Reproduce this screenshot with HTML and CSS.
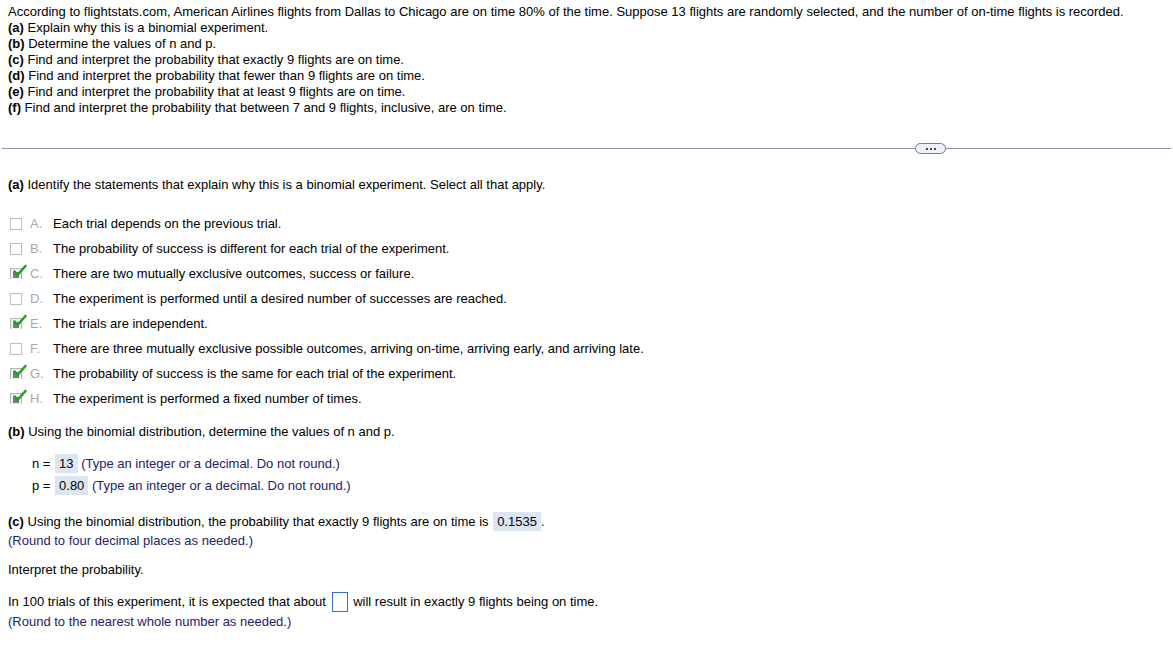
FILE: index.html
```html
<!DOCTYPE html>
<html>
<head>
<meta charset="utf-8">
<link rel="stylesheet" href="styles.css">
</head>
<body>
<div class="page">
  <div class="intro">
    <p>According to flightstats.com, American Airlines flights from Dallas to Chicago are on time 80% of the time. Suppose 13 flights are randomly selected, and the number of on-time flights is recorded.</p>
    <p><b>(a)</b> Explain why this is a binomial experiment.</p>
    <p><b>(b)</b> Determine the values of n and p.</p>
    <p><b>(c)</b> Find and interpret the probability that exactly 9 flights are on time.</p>
    <p><b>(d)</b> Find and interpret the probability that fewer than 9 flights are on time.</p>
    <p><b>(e)</b> Find and interpret the probability that at least 9 flights are on time.</p>
    <p><b>(f)</b> Find and interpret the probability that between 7 and 9 flights, inclusive, are on time.</p>
  </div>

  <div class="divider"><span class="pill"><i></i><i></i><i></i></span></div>

  <p class="q-a"><b>(a)</b> Identify the statements that explain why this is a binomial experiment. Select all that apply.</p>

  <ul class="options">
    <li><span class="box"></span><span class="letter">A.</span><span>Each trial depends on the previous trial.</span></li>
    <li><span class="box"></span><span class="letter">B.</span><span>The probability of success is different for each trial of the experiment.</span></li>
    <li><span class="box checked"><svg width="20" height="16" viewBox="0 0 20 16"><rect x="0.5" y="5.5" width="11" height="11" fill="#f2f2f2" stroke="#b4b4b4"/><path d="M3 9h6v6H3z" fill="#7a7a7a"/><path d="M4.5 8.5 L7.5 12 L15.5 3" fill="none" stroke="#2d9a2d" stroke-width="2.6" stroke-linecap="round" stroke-linejoin="round"/></svg></span><span class="letter">C.</span><span>There are two mutually exclusive outcomes, success or failure.</span></li>
    <li><span class="box"></span><span class="letter">D.</span><span>The experiment is performed until a desired number of successes are reached.</span></li>
    <li><span class="box checked"><svg width="20" height="16" viewBox="0 0 20 16"><rect x="0.5" y="5.5" width="11" height="11" fill="#f2f2f2" stroke="#b4b4b4"/><path d="M3 9h6v6H3z" fill="#7a7a7a"/><path d="M4.5 8.5 L7.5 12 L15.5 3" fill="none" stroke="#2d9a2d" stroke-width="2.6" stroke-linecap="round" stroke-linejoin="round"/></svg></span><span class="letter">E.</span><span>The trials are independent.</span></li>
    <li><span class="box"></span><span class="letter">F.</span><span>There are three mutually exclusive possible outcomes, arriving on-time, arriving early, and arriving late.</span></li>
    <li><span class="box checked"><svg width="20" height="16" viewBox="0 0 20 16"><rect x="0.5" y="5.5" width="11" height="11" fill="#f2f2f2" stroke="#b4b4b4"/><path d="M3 9h6v6H3z" fill="#7a7a7a"/><path d="M4.5 8.5 L7.5 12 L15.5 3" fill="none" stroke="#2d9a2d" stroke-width="2.6" stroke-linecap="round" stroke-linejoin="round"/></svg></span><span class="letter">G.</span><span>The probability of success is the same for each trial of the experiment.</span></li>
    <li><span class="box checked"><svg width="20" height="16" viewBox="0 0 20 16"><rect x="0.5" y="5.5" width="11" height="11" fill="#f2f2f2" stroke="#b4b4b4"/><path d="M3 9h6v6H3z" fill="#7a7a7a"/><path d="M4.5 8.5 L7.5 12 L15.5 3" fill="none" stroke="#2d9a2d" stroke-width="2.6" stroke-linecap="round" stroke-linejoin="round"/></svg></span><span class="letter">H.</span><span>The experiment is performed a fixed number of times.</span></li>
  </ul>

  <p class="q-b"><b>(b)</b> Using the binomial distribution, determine the values of n and p.</p>
  <div class="np">
    <p>n = <span class="ans">13</span> <span class="hint">(Type an integer or a decimal. Do not round.)</span></p>
    <p>p = <span class="ans">0.80</span> <span class="hint">(Type an integer or a decimal. Do not round.)</span></p>
  </div>

  <p class="q-c"><b>(c)</b> Using the binomial distribution, the probability that exactly 9 flights are on time is <span class="ans">0.1535</span>.</p>
  <p class="hint">(Round to four decimal places as needed.)</p>
  <p class="interp">Interpret the probability.</p>
  <p class="trials">In 100 trials of this experiment, it is expected that about <span class="blank"></span> will result in exactly 9 flights being on time.</p>
  <p class="hint">(Round to the nearest whole number as needed.)</p>
</div>
</body>
</html>
```

FILE: styles.css
```css
html, body {
  margin: 0;
  padding: 0;
  background: #fff;
}
body {
  font-family: "Liberation Sans", Arial, sans-serif;
  font-size: 13px;
  color: #000;
}
p {
  margin: 0;
}
.page {
  padding: 4px 8px 0 8px;
}
.intro p {
  line-height: 16px;
}
.divider {
  position: relative;
  margin: 32px -6px 0 -6px;
  height: 1px;
  background: #8a96aa;
}
.pill {
  position: absolute;
  left: 913px;
  top: -5px;
  width: 29px;
  height: 9px;
  border: 1px solid #6e7d92;
  border-radius: 6px;
  background: #eef1f5;
  display: flex;
  justify-content: center;
  align-items: center;
  gap: 2px;
}
.pill i {
  width: 2px;
  height: 2px;
  background: #3c4656;
  display: block;
}
.q-a {
  margin-top: 28px;
  line-height: 16px;
}
.options {
  list-style: none;
  margin: 18px 0 0 0;
  padding: 0;
}
.options li {
  display: flex;
  align-items: center;
  height: 25px;
}
.box {
  width: 12px;
  height: 12px;
  border: 1px solid #bdbdbd;
  box-sizing: border-box;
  margin-left: 2px;
  margin-right: 8px;
  flex: none;
}
.box.checked {
  border: none;
  width: 20px;
  height: 16px;
  margin-right: 0;
  margin-top: -5px;
}
.box.checked svg {
  display: block;
}
.letter {
  color: #a8a8a8;
  width: 23px;
  flex: none;
}
.q-b {
  margin-top: 13px;
  line-height: 16px;
}
.np {
  margin-top: 13px;
  padding-left: 24px;
}
.np p {
  line-height: 22px;
}
.ans {
  background: #dde5f0;
  padding: 2px 4px;
  margin-left: 1px;
}
.hint {
  color: #22226e;
}
.q-c {
  margin-top: 15px;
  line-height: 20px;
}
.q-c + .hint {
  line-height: 18px;
}
.interp {
  margin-top: 11px;
  line-height: 18px;
}
.trials {
  margin-top: 13px;
  line-height: 20px;
}
.trials + .hint {
  line-height: 17px;
}
.blank {
  display: inline-block;
  width: 14px;
  height: 18px;
  border: 1px solid #3b6fd0;
  vertical-align: middle;
  margin: 0 2px;
  position: relative;
  top: -1px;
}
```
